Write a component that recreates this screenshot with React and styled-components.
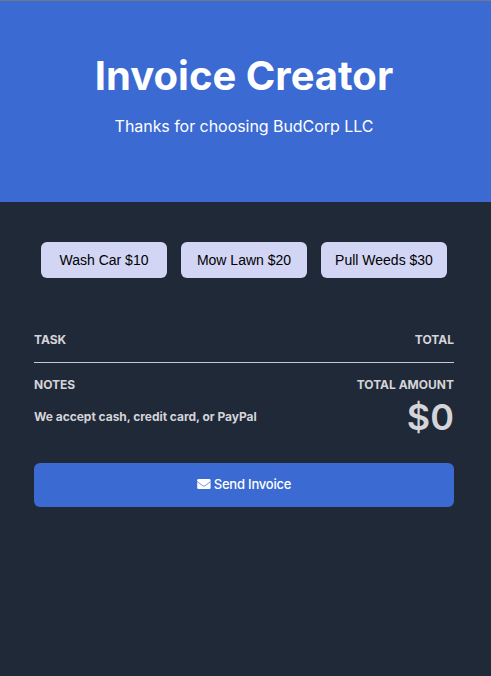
import React from "react";
import styled, { createGlobalStyle } from "styled-components";

const GlobalStyle = createGlobalStyle`
  * { box-sizing: border-box; }
  body { margin: 0; background: #202938; font-family: Inter, sans-serif; color: #d5d4d8; }
`;
const Page = styled.div`
  height: 676px;
  display: flex;
  flex-direction: column;
  border-top: 1px solid #717986;
  background: #202938;
`;
const Header = styled.header`
  height: 201px;
  padding-top: 51px;
  background: #3b6ad3;
  color: #fff;
  text-align: center;
`;
const Title = styled.h1`
  margin: 0 0 16px;
  padding-right: 3px;
  font-size: 40px;
  line-height: 48px;
  font-weight: 700;
`;
const Subtitle = styled.p`
  margin: 0;
  padding-right: 3px;
  font-size: 16px;
  line-height: 20px;
  letter-spacing: -0.05px;
`;
const Services = styled.div`
  display: grid;
  grid-template-columns: repeat(3, 126px);
  gap: 14px;
  padding: 40px 0 0 41px;
`;
const ServiceButton = styled.button`
  height: 36px;
  padding: 0;
  border: 0;
  border-radius: 6px;
  background: #d2d5f4;
  color: #000;
  font: 14px "Liberation Sans", sans-serif;
`;
const Invoice = styled.main`
  width: 420px;
  margin: 54px 0 0 34px;
`;
const Row = styled.div`
  display: flex;
  justify-content: space-between;
  font-size: 12px;
  line-height: 16px;
  font-weight: 700;
`;
const Heading = styled(Row)`
  padding-bottom: 14px;
  margin-bottom: 14px;
  border-bottom: 1px solid #c2cad6;
`;
const Details = styled(Row)`
  align-items: center;
  height: 48px;
`;
const Note = styled.span`
  letter-spacing: -0.03px;
`;
const Amount = styled.span`
  font-size: 36px;
  line-height: 46px;
  font-weight: 600;
`;
const SendButton = styled.button`
  width: 100%;
  height: 44px;
  margin-top: 22px;
  padding: 0 0 2px;
  display: flex;
  align-items: center;
  justify-content: center;
  gap: 3px;
  border: 0;
  border-radius: 6px;
  background: #3b6ad3;
  color: #fff;
  font: 500 13px Inter, sans-serif;
  letter-spacing: -0.2px;
`;
const Envelope = () => (
  <svg width="14" height="10" viewBox="0 0 14 10" aria-hidden="true">
    <rect x="0.2" width="13.4" height="10" rx="1.3" fill="#fff" />
    <path d="M0.2 2.6 5.7 6.7Q6.9 7.5 8.1 6.7L13.6 2.6" fill="none" stroke="#3b6ad3" strokeWidth="0.7" />
  </svg>
);
const services = ["Wash Car $10", "Mow Lawn $20", "Pull Weeds $30"];

export default function App() {
  return (
    <Page>
      <GlobalStyle />
      <Header>
        <Title>Invoice Creator</Title>
        <Subtitle>Thanks for choosing BudCorp LLC</Subtitle>
      </Header>
      <Services>
        {services.map((s) => <ServiceButton key={s}>{s}</ServiceButton>)}
      </Services>
      <Invoice>
        <Heading><span>TASK</span><span>TOTAL</span></Heading>
        <Row><span>NOTES</span><span>TOTAL AMOUNT</span></Row>
        <Details><Note>We accept cash, credit card, or PayPal</Note><Amount>$0</Amount></Details>
        <SendButton><Envelope />Send Invoice</SendButton>
      </Invoice>
    </Page>
  );
}
